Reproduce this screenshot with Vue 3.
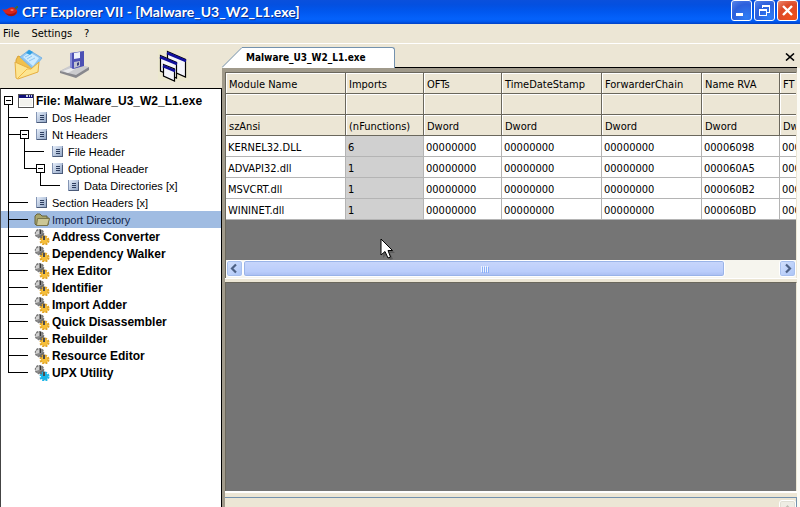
<script setup>
const titleText = 'CFF Explorer VII - [Malware_U3_W2_L1.exe]'
const menus = ['File', 'Settings', '?']

const branch = 'M8.5 0V17M8 8.5H28'
const tree = [
  { label: 'File: Malware_U3_W2_L1.exe', icon: 'window', gutter: 16, lines: 'M8.5 13V17', box: 4, bold: true },
  { label: 'Dos Header', icon: 'page', gutter: 34, lines: branch },
  { label: 'Nt Headers', icon: 'page', gutter: 34, lines: 'M8.5 0V17M8 8.5H20M24.5 13V17', box: 20 },
  { label: 'File Header', icon: 'page', gutter: 50, lines: 'M8.5 0V17M24.5 0V17M24 8.5H44' },
  { label: 'Optional Header', icon: 'page', gutter: 50, lines: 'M8.5 0V17M24.5 0V9M24 8.5H36M40.5 13V17', box: 36 },
  { label: 'Data Directories [x]', icon: 'page', gutter: 66, lines: 'M8.5 0V17M40.5 0V9M40 8.5H60' },
  { label: 'Section Headers [x]', icon: 'page', gutter: 34, lines: branch },
  { label: 'Import Directory', icon: 'folder', gutter: 34, lines: branch, selected: true },
  { label: 'Address Converter', icon: 'gears', gutter: 34, lines: branch, bold: true },
  { label: 'Dependency Walker', icon: 'gears', gutter: 34, lines: branch, bold: true },
  { label: 'Hex Editor', icon: 'gears', gutter: 34, lines: branch, bold: true },
  { label: 'Identifier', icon: 'gears', gutter: 34, lines: branch, bold: true },
  { label: 'Import Adder', icon: 'gears', gutter: 34, lines: branch, bold: true },
  { label: 'Quick Disassembler', icon: 'gears', gutter: 34, lines: branch, bold: true },
  { label: 'Rebuilder', icon: 'gears', gutter: 34, lines: branch, bold: true },
  { label: 'Resource Editor', icon: 'gears', gutter: 34, lines: branch, bold: true },
  { label: 'UPX Utility', icon: 'gears', tint: '#19b4e6', gutter: 34, lines: 'M8.5 0V9M8 8.5H28', bold: true }
]

const columns = [
  { name: 'Module Name', type: 'szAnsi', width: 120 },
  { name: 'Imports', type: '(nFunctions)', width: 78 },
  { name: 'OFTs', type: 'Dword', width: 78 },
  { name: 'TimeDateStamp', type: 'Dword', width: 100 },
  { name: 'ForwarderChain', type: 'Dword', width: 100 },
  { name: 'Name RVA', type: 'Dword', width: 78 },
  { name: 'FT', type: 'Dword', width: 78 }
]
const rows = [
  ['KERNEL32.DLL', '6', '00000000', '00000000', '00000000', '00006098', '000'],
  ['ADVAPI32.dll', '1', '00000000', '00000000', '00000000', '000060A5', '000'],
  ['MSVCRT.dll', '1', '00000000', '00000000', '00000000', '000060B2', '000'],
  ['WININET.dll', '1', '00000000', '00000000', '00000000', '000060BD', '000']
]
</script>

<template>
  <div class="app">
    <header class="titlebar">
      <svg class="chili" width="18" height="16" viewBox="0 0 18 16" aria-hidden="true">
        <path d="M0 5C3 6 4 6 7 4C9 3 12 3 14 5C17 8 14 12 9 12C5 12 3 9 0 5Z" fill="#d8241c" />
        <path d="M8 6C9 5 11 5 12 6L10 7Z" fill="#ff8a78" />
        <path d="M3 9C8 11 12 10 15 7C14 13 8 14 3 9Z" fill="#a01414" />
        <path d="M13 5L15 3L16 3" stroke="#3c6a3a" stroke-width="2" fill="none" />
      </svg>
      <h1>{{ titleText }}</h1>
      <div class="window-buttons">
        <button type="button" class="wb" aria-label="Minimize">
          <svg width="19" height="19" viewBox="0 0 19 19"><path d="M4 12H11V15H4Z" fill="#fff" /></svg>
        </button>
        <button type="button" class="wb" aria-label="Restore">
          <svg width="19" height="19" viewBox="0 0 19 19" fill="none" stroke="#fff" shape-rendering="crispEdges">
            <path d="M7 7V4.500H14.500V11H12M7 5.500H14" /><path d="M4.500 8.500H11.500V14.500H4.500ZM4 9.500H12" />
          </svg>
        </button>
        <button type="button" class="wb close" aria-label="Close">
          <svg width="19" height="19" viewBox="0 0 19 19"><path d="M5 5L14 14M14 5L5 14" stroke="#fff" stroke-width="2.400" /></svg>
        </button>
      </div>
    </header>

    <nav class="menubar">
      <button v-for="m in menus" :key="m" type="button">{{ m }}</button>
    </nav>

    <div class="workspace">
      <aside class="side">
        <div class="toolbar">
          <button type="button" aria-label="Open file">
            <svg width="30" height="32" viewBox="0 0 30 32">
              <path d="M2 11L4 7L9 9L24 13L22 22L3 29Z" fill="#f0c04c" stroke="#d9a236" />
              <path d="M6 8L15 1L28 9L19 20Z" fill="#8fc6f2" stroke="#7db4e2" />
              <path d="M9 8L15 3L25 9L19 17Z" fill="#cdebff" />
              <path d="M12 4L15 1L19 3L16 6Z" fill="#2d9fe2" />
              <path d="M11 8L15 6M13 10L18 7M15 12L21 9" stroke="#8fc6f2" />
              <path d="M1 13L10 17L17 20L25 13L24 23L4 30L2 29Z" fill="#fde591" stroke="#e6ae40" />
              <path d="M4 29L13 20L17 20" fill="none" stroke="#f2b944" stroke-width="1" />
            </svg>
          </button>
          <button type="button" aria-label="Save file">
            <svg width="30" height="32" viewBox="0 0 30 32">
              <path d="M0 22L11 17L29 18V21L16 29L0 24Z" fill="#88888d" />
              <path d="M0 22L11 16L29 18L16 26Z" fill="#cbcbce" />
              <path d="M3 22L11 19L15 20L8 24Z" fill="#e9e9ea" />
              <path d="M10 4L24 2V17L13 20L10 18Z" fill="#4c50b4" />
              <path d="M14 4L20 3V9L14 10Z" fill="#eef1fb" />
              <path d="M14 13L20 12V17L14 19Z" fill="#c2c4d0" />
              <path d="M17 14L19 13V16L17 17Z" fill="#3a3f86" />
              <path d="M10 4V18L12 19V4Z" fill="#8a8ed8" />
            </svg>
          </button>
          <button type="button" class="cascade" aria-label="Cascade windows">
            <svg width="32" height="34" viewBox="0 0 32 34">
              <path d="M0 0H31V32H0Z" fill="#ece8cf" />
              <g stroke="#000" stroke-width="1.200" fill="#f4f5fb">
                <path d="M9.500 2.500L27.500 10.500V28L9.500 20Z" />
                <path d="M2.500 6.500L18.500 13.500V29L2.500 22Z" />
                <path d="M5.500 15.500L16.500 20V32L5.500 27Z" />
              </g>
              <g stroke="#10109c" stroke-width="2.500">
                <path d="M9 4L28 12M2 8L19 15M5 17L17 22" />
              </g>
            </svg>
          </button>
        </div>
        <ul class="tree">
          <li v-for="n in tree" :key="n.label">
            <button type="button" class="node" :class="{ bold: n.bold, selected: n.selected }">
              <svg class="gutter" :width="n.gutter" height="17" shape-rendering="crispEdges" fill="none" stroke="#000" aria-hidden="true">
                <path :d="n.lines" />
                <g v-if="n.box">
                  <rect :x="n.box + 0.5" y="4.500" width="8" height="8" fill="#fff" />
                  <path :d="`M${n.box + 2} 8.500h5`" />
                </g>
              </svg>
              <svg v-if="n.icon === 'window'" class="icon wide" width="16" height="16" viewBox="0 0 16 16" shape-rendering="crispEdges">
                <path d="M0 1H16V15H0Z" fill="#555" /><path d="M1 2H15V14H1Z" fill="#fff" /><path d="M2 6H14V13H2Z" fill="#f2f2ee" />
                <path d="M1 2H15V5H1Z" fill="#101078" /><path d="M8 2H10V4H8ZM11 2H12V4H11ZM13 2H14V4H13Z" fill="#c8d0e8" />
              </svg>
              <svg v-else-if="n.icon === 'page'" class="icon" width="16" height="16" viewBox="0 0 16 16">
                <defs>
                  <linearGradient id="pageFill" x1="0" y1="0" x2="1" y2="1">
                    <stop offset="0" stop-color="#e6eefa" /><stop offset="1" stop-color="#93a7c6" />
                  </linearGradient>
                </defs>
                <path d="M2 2H13V13H2Z" fill="#8495b4" />
                <path d="M3 2H12V12H3Z" fill="url(#pageFill)" />
                <path d="M12.500 4V13M3 12.500H13" stroke="#4a5a78" />
                <path d="M6 5.500H10M6 7.500H10M6 9.500H10" stroke="#2d3d5e" />
              </svg>
              <svg v-else-if="n.icon === 'folder'" class="icon" width="16" height="16" viewBox="0 0 16 16">
                <path d="M1 4L3 2H6L8 4H13V6H15L14 13H2L1 12Z" fill="#a8a56c" stroke="#66653c" />
                <path d="M3.500 6.500H15.500L13.500 13.500H2.500Z" fill="#cbc795" stroke="#77744a" />
              </svg>
              <svg v-else class="icon" width="16" height="16" viewBox="0 0 16 16">
                <circle cx="5.500" cy="4.500" r="4" fill="#8b8b8b" stroke="#7a7a7a" stroke-width="1.500" stroke-dasharray="2 1" />
                <path d="M2 3L5 1L5 5L2 6Z" fill="#cfcfcf" />
                <path d="M6 1H7V5H6Z" fill="#333" />
                <path d="M5 7L9 5L11 7L10 11L7 10Z" fill="#6c6c6c" />
                <circle cx="10.500" cy="11.500" r="3.500" :fill="n.tint || '#f6bf3a'" />
                <circle cx="10.500" cy="11.500" r="4" fill="none" :stroke="n.tint || '#e2a424'" stroke-width="2" stroke-dasharray="2 1.150" />
                <path d="M9 7H11V11H9Z" fill="#4d4d4d" />
              </svg>
              <span>{{ n.label }}</span>
            </button>
          </li>
        </ul>
      </aside>

      <main class="main">
        <div class="tabs">
          <button type="button" class="tab">
            <svg class="slant" width="21" height="21" viewBox="0 0 21 21" aria-hidden="true">
              <path d="M0 21L20 0.500H21V21Z" fill="#fff" /><path d="M0 20.500L20 0.500H21" fill="none" stroke="#7492ae" />
            </svg>
            <span>Malware_U3_W2_L1.exe</span>
          </button>
          <div class="tab-rest">
            <button type="button" class="tab-close" aria-label="Close tab">
              <svg width="10" height="8" viewBox="0 0 10 8"><path d="M1 0.500L9 7.500M9 0.500L1 7.500" stroke="#000" stroke-width="1.600" /></svg>
            </button>
          </div>
        </div>

        <div class="frame">
          <section class="grid-pane">
            <div class="grid-view">
              <table>
                <colgroup><col v-for="c in columns" :key="c.name" :style="{ width: c.width + 'px' }" /></colgroup>
                <thead>
                  <tr><th v-for="c in columns" :key="c.name" scope="col">{{ c.name }}</th></tr>
                  <tr><th v-for="c in columns" :key="c.name"></th></tr>
                  <tr><th v-for="c in columns" :key="c.name">{{ c.type }}</th></tr>
                </thead>
                <tbody>
                  <tr v-for="r in rows" :key="r[0]"><td v-for="(v, i) in r" :key="i">{{ v }}</td></tr>
                </tbody>
              </table>
              <svg class="pointer" width="18" height="24" viewBox="0 0 18 24" aria-hidden="true">
                <path d="M3 3V20L7 16L10 22L13 21L10 15H15Z" fill="#444" opacity="0.500" />
                <path d="M1 1V17L5 13.500L8 20L10.500 19L8 12.500H12.500Z" fill="#fff" stroke="#000" />
              </svg>
            </div>
            <div class="hscroll">
              <button type="button" class="arrow" aria-label="Scroll left">
                <svg width="13" height="13" viewBox="0 0 13 13"><path d="M8 2.500L4 6.500L8 10.500" fill="none" stroke="#4d6185" stroke-width="2.200" /></svg>
              </button>
              <div class="track">
                <div class="thumb"><i></i><i></i><i></i><i></i></div>
              </div>
              <button type="button" class="arrow" aria-label="Scroll right">
                <svg width="13" height="13" viewBox="0 0 13 13"><path d="M5 2.500L9 6.500L5 10.500" fill="none" stroke="#4d6185" stroke-width="2.200" /></svg>
              </button>
            </div>
          </section>
          <section class="detail-pane"></section>
          <section class="bottom-pane">
            <div class="bottom-box">
              <button type="button" class="arrow off" aria-label="Scroll up">
                <svg width="13" height="13" viewBox="0 0 13 13"><path d="M2 8L6.500 3L11 8Z" fill="#c0bfb4" /></svg>
              </button>
            </div>
          </section>
        </div>
      </main>
    </div>
  </div>
</template>

<style>
body {
  margin: 0;
}
</style>

<style scoped>
.app {
  display: flex;
  flex-direction: column;
  height: 100vh;
  overflow: hidden;
  background: #ece6d5;
  color: #000;
  font-family: "DejaVu Sans Condensed", "Noto Sans", sans-serif;
  font-size: 11px;
  line-height: 14px;
}
button {
  margin: 0;
  padding: 0;
  border: 0;
  background: none;
  color: inherit;
  font: inherit;
}
svg {
  display: block;
}
.titlebar {
  flex: none;
  display: flex;
  align-items: center;
  height: 24px;
  padding: 0 2px;
  box-sizing: border-box;
  background: linear-gradient(#0a50dc 0, #0450e0 20%, #0058f0 50%, #0462fc 80%, #0058ee 90%, #0040c4 100%);
}
.titlebar h1 {
  flex: 1;
  margin: 0 0 0 2px;
  color: #fff;
  font: bold 14px/20px Lato, sans-serif;
  white-space: nowrap;
  text-shadow: 1px 1px 0 #0a2c8c;
}
.window-buttons {
  display: flex;
  gap: 2px;
  align-self: flex-start;
}
.wb {
  width: 21px;
  height: 21px;
  border: 1px solid #fff;
  border-radius: 3px;
  background: radial-gradient(circle at 75% 85%, #2f7df5, #2c5fdc 60%, #5a86ea);
}
.wb.close {
  background: radial-gradient(circle at 75% 85%, #f0501c, #dc4a28 60%, #ee8a70);
}
.menubar {
  flex: none;
  display: flex;
  gap: 12px;
  height: 20px;
  box-sizing: border-box;
  padding: 1px 3px 0;
  border-bottom: 1px solid #fff;
}
.workspace {
  flex: 1;
  display: flex;
  min-height: 0;
}
.side {
  flex: 0 0 222px;
  display: flex;
  flex-direction: column;
}
.toolbar {
  flex: none;
  display: flex;
  align-items: flex-start;
  gap: 16px;
  height: 44px;
  box-sizing: border-box;
  padding: 5px 14px;
}
.cascade {
  margin-left: 52px;
}
.tree {
  flex: 1;
  margin: 0;
  padding: 3px 0 0;
  list-style: none;
  border: 1px solid #000;
  border-left-color: #444;
  border-bottom: 0;
  background: #fff;
  font-family: "Liberation Sans", sans-serif;
}
.node {
  display: flex;
  align-items: center;
  width: 100%;
  height: 17px;
  text-align: left;
  white-space: nowrap;
}
.gutter {
  flex: none;
  margin-left: -1px;
}
.icon {
  flex: none;
  margin-right: 2px;
}
.icon.wide {
  margin-left: 2px;
}
.node.bold {
  font-size: 12px;
  font-weight: bold;
}
.node.selected {
  background: #a0bce2;
  color: #14284c;
}
.main {
  flex: 1;
  display: flex;
  flex-direction: column;
  min-width: 0;
  padding-right: 3px;
}
.tabs {
  flex: none;
  display: flex;
  align-items: flex-end;
  height: 24px;
}
.tab {
  display: flex;
  height: 21px;
  font-weight: bold;
  font-size: 10px;
  line-height: 20px;
}
.tab span {
  box-sizing: border-box;
  width: 152px;
  height: 21px;
  padding-left: 3px;
  border-top: 1px solid #7492ae;
  border-right: 1px solid #7492ae;
  border-top-right-radius: 3px;
  background: #fff;
  text-align: left;
}
.tab-rest {
  flex: 1;
  display: flex;
  justify-content: flex-end;
  align-items: center;
  height: 24px;
  box-sizing: border-box;
  padding: 3px 2px 0 0;
  border-bottom: 1px solid #000;
}
.frame {
  flex: 1;
  display: flex;
  flex-direction: column;
  min-height: 0;
  border: solid #a09a8b;
  border-width: 4px 0 0 3px;
  box-shadow: 3px 0 0 #fbfaf4;
}
.grid-pane {
  flex: none;
  border: solid #6a675c;
  border-width: 1px 1px 0 1px;
  border-right-color: #ece6d5;
}
.grid-view {
  position: relative;
  height: 187px;
  overflow: hidden;
  background: #757575;
}
table {
  width: 632px;
  table-layout: fixed;
  border-collapse: separate;
  border-spacing: 0;
}
th,
td {
  box-sizing: border-box;
  height: 21px;
  padding: 3px 2px 0;
  border: solid #b4b4b4;
  border-width: 0 1px 1px 0;
  background: #fff;
  font-weight: normal;
  text-align: left;
  white-space: nowrap;
  overflow: hidden;
}
th {
  padding: 3px 3px 0;
  border-color: #6a675c;
  background: #ece6d5;
  box-shadow: inset 1px 1px 0 #fff;
}
td:nth-child(2) {
  background: #d0d0d0;
}
.pointer {
  position: absolute;
  left: 154px;
  top: 165px;
}
.hscroll {
  display: flex;
  height: 17px;
  padding-bottom: 1px;
  background: #f6f5ee;
}
.arrow {
  flex: none;
  display: grid;
  place-items: center;
  width: 17px;
  height: 17px;
  box-sizing: border-box;
  border: 1px solid #fff;
  border-radius: 3px;
  background: linear-gradient(135deg, #d5e2fd, #a9c3f6);
  box-shadow: inset 0 0 0 1px #a8c0ee;
}
.arrow.off {
  background: #eeede4;
  box-shadow: inset 0 0 0 1px #e0dfd4;
}
.track {
  flex: 1;
  display: flex;
}
.thumb {
  width: 90%;
  display: flex;
  justify-content: center;
  align-items: center;
  gap: 1px;
  box-sizing: border-box;
  border: 1px solid #fff;
  border-radius: 3px;
  background: linear-gradient(#c8d6fb, #bacdfb 70%, #a9bdf0);
  box-shadow: inset 0 0 0 1px #9ab4e8;
}
.thumb i {
  width: 1px;
  height: 6px;
  background: #eef4fe;
  box-shadow: 1px 1px 0 #8cb0f8;
}
.detail-pane {
  flex: 1;
  border: solid #6a675c;
  border-width: 1px 1px 0 1px;
  border-right-color: #ece6d5;
  margin-top: 4px;
  background: #757575;
  box-shadow: 0 -3px 0 #ece6d5, 0 -4px 0 #fff;
}
.bottom-pane {
  flex: 0 0 16px;
  box-sizing: border-box;
  padding-top: 4px;
  border-top: 2px solid #fff;
  background: #ece6d5;
}
.bottom-box {
  display: flex;
  justify-content: flex-end;
  height: 10px;
  box-sizing: border-box;
  overflow: hidden;
  border-top: 1px solid #7492ae;
  border-right: 1px solid #7492ae;
  padding-top: 2px;
}
</style>
